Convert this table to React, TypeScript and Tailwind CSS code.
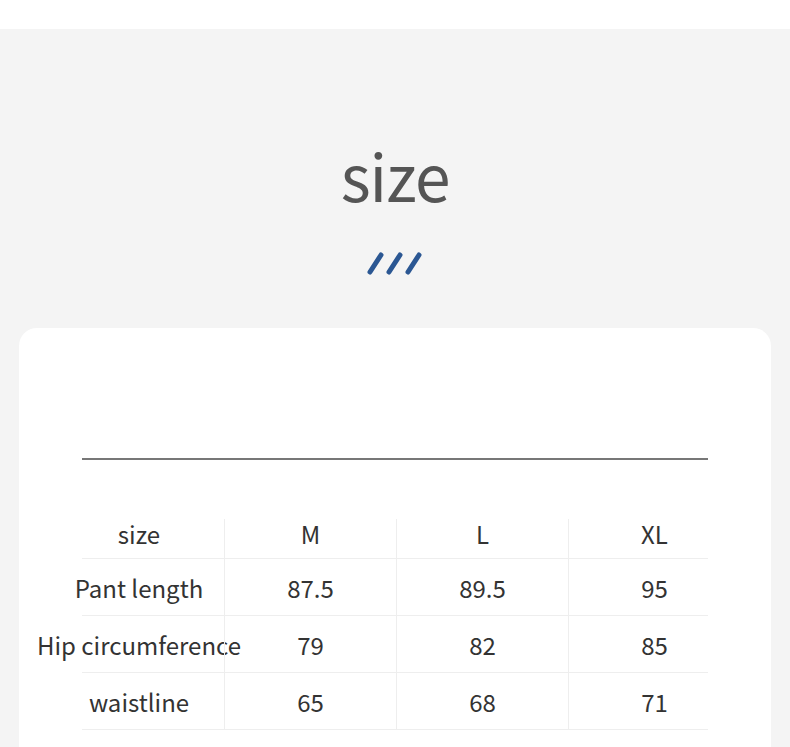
const rows = [
  ["size", "M", "L", "XL"],
  ["Pant length", "87.5", "89.5", "95"],
  ["Hip circumference", "79", "82", "85"],
  ["waistline", "65", "68", "71"],
];

function Slashes() {
  return (
    <svg width="58" height="26" viewBox="0 0 58 26" fill="none">
      {[0, 19, 38].map((x) => (
        <line
          key={x}
          x1={x + 4}
          y1={22}
          x2={x + 15}
          y2={5}
          stroke="#2b5793"
          strokeWidth="5"
          strokeLinecap="round"
        />
      ))}
    </svg>
  );
}

export default function App() {
  return (
    <div
      className="w-[790px] h-[747px] overflow-hidden bg-white"
      style={{ fontFamily: '"Noto Sans CJK SC", "Noto Sans", sans-serif' }}
    >
      <div className="h-[29px] bg-white" />
      <div className="bg-[#f4f4f4] h-[718px] px-[19px]">
        {/* heading */}
        <div className="flex flex-col items-center pt-[113px]">
          <h1 className="text-[64px] leading-[64px] text-[#555] tracking-[-1px]">size</h1>
          <div className="mt-[44px]">
            <Slashes />
          </div>
        </div>

        {/* card */}
        <div className="mt-[52px] bg-white rounded-t-[18px] h-[420px] pt-[130px]">
          <div className="ml-[63px] mr-[63px] h-[2px] bg-[#777]" />
          <div className="mt-[59px] ml-[35px] w-[686px] text-[24px] leading-[24px] text-[#333]">
            {rows.map((row, i) => (
              <div key={i}>
                <div
                  className={
                    "grid grid-cols-[170px_172px_172px_172px] " +
                    (i === 0 ? "h-[39px]" : "h-[56px]")
                  }
                >
                  {row.map((cell, j) => (
                    <div
                      key={j}
                      className={
                        "flex items-center justify-center whitespace-nowrap " +
                        (j > 0 ? "border-l border-[#eee] " : "") +
                        (i === 0 ? "pb-[10px]" : "pt-[1px]")
                      }
                    >
                      {cell}
                    </div>
                  ))}
                </div>
                <div className="ml-[28px] mr-[32px] h-px bg-[#eee]" />
              </div>
            ))}
          </div>
        </div>
      </div>
    </div>
  );
}
